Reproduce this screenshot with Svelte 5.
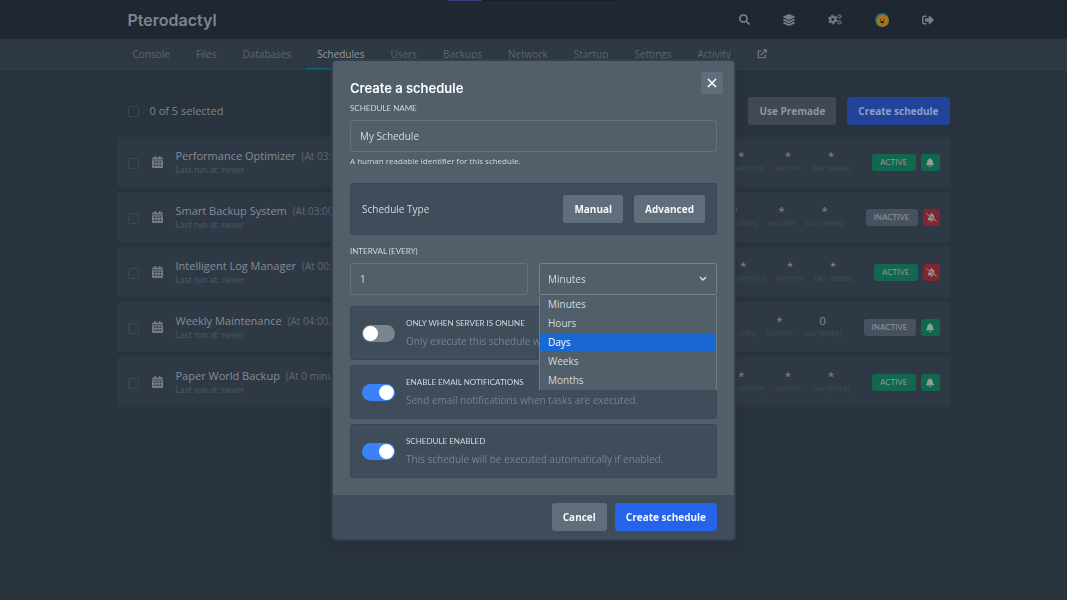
<script>
    const tabs = ['Console', 'Files', 'Databases', 'Schedules', 'Users', 'Backups', 'Network', 'Startup', 'Settings', 'Activity'];
    const units = ['Minutes', 'Hours', 'Days', 'Weeks', 'Months'];
    const columns = ['Minute', 'Hour', 'Day (Month)', 'Month', 'Day (Week)'];

    const schedules = [
        { name: 'Performance Optimizer', when: 'At 03:00 AM', cron: ['0', '3', '*', '*', '*'], active: true, notify: true },
        { name: 'Smart Backup System', when: 'At 03:00', cron: ['0', '3', '*', '*', '*'], active: false, notify: false },
        { name: 'Intelligent Log Manager', when: 'At 00:00', cron: ['0', '0', '*', '*', '*'], active: true, notify: false },
        { name: 'Weekly Maintenance', when: 'At 04:00, only on Sunday', cron: ['0', '4', '*', '*', '0'], active: false, notify: true },
        { name: 'Paper World Backup', when: 'At 0 minutes past the hour', cron: ['0', '*', '*', '*', '*'], active: true, notify: true },
    ];

    let name = $state('My Schedule');
    let interval = $state('1');
    let unit = $state('Minutes');
    let highlighted = $state('Days');
    let options = $state([
        { id: 'online', title: 'Only when server is online', text: 'Only execute this schedule when the server is running.', on: false },
        { id: 'email', title: 'Enable email notifications', text: 'Send email notifications when tasks are executed.', on: true },
        { id: 'enabled', title: 'Schedule enabled', text: 'This schedule will be executed automatically if enabled.', on: true },
    ]);
</script>

<div class="loader"></div>

<header>
    <div class="wrap topbar">
        <a class="brand" href="#home">Pterodactyl</a>
        <nav class="tools">
            <a href="#search" aria-label="Search">
                <svg viewBox="0 0 512 512" width="11" height="11"><path d="M505 442.7L405.3 343c-4.5-4.5-10.6-7-17-7H372c27.6-35.3 44-79.7 44-128C416 93.1 322.9 0 208 0S0 93.1 0 208s93.1 208 208 208c48.3 0 92.7-16.4 128-44v16.3c0 6.4 2.5 12.5 7 17l99.7 99.7c9.4 9.4 24.6 9.4 33.9 0l28.3-28.3c9.4-9.4 9.4-24.6.1-34zM208 336c-70.7 0-128-57.2-128-128 0-70.7 57.2-128 128-128 70.7 0 128 57.2 128 128 0 70.7-57.2 128-128 128z"/></svg>
            </a>
            <a href="#servers" aria-label="Servers">
                <svg viewBox="0 0 512 512" width="12" height="12"><path d="M12.41 148.02l232.94 105.67c6.8 3.09 14.49 3.09 21.29 0l232.94-105.67c16.55-7.51 16.55-32.52 0-40.03L266.65 2.31a25.607 25.607 0 0 0-21.29 0L12.41 107.98c-16.55 7.51-16.55 32.53 0 40.04zm487.18 88.28l-58.09-26.33-161.64 73.27c-7.56 3.43-15.59 5.17-23.86 5.17s-16.29-1.74-23.86-5.17L70.51 209.97l-58.1 26.33c-16.55 7.5-16.55 32.5 0 40l232.94 105.59c6.8 3.08 14.49 3.08 21.29 0L499.59 276.3c16.55-7.5 16.55-32.5 0-40zm0 127.8l-57.87-26.23-161.86 73.37c-7.56 3.43-15.59 5.17-23.86 5.17s-16.29-1.74-23.86-5.17L70.29 337.87 12.41 364.1c-16.55 7.5-16.55 32.5 0 40l232.94 105.59c6.8 3.08 14.49 3.08 21.29 0L499.59 404.1c16.55-7.5 16.55-32.5 0-40z"/></svg>
            </a>
            <a href="#admin" aria-label="Admin">
                <svg viewBox="0 0 28 22" width="14" height="11" fill="none">
                    <g class="line">
                        <circle cx="9.5" cy="11" r="4.8" stroke-width="4"/>
                        <circle cx="9.5" cy="11" r="7.8" stroke-width="3.4" stroke-dasharray="4.6 3.57"/>
                        <circle cx="23" cy="5" r="2.5" stroke-width="2"/>
                        <circle cx="23" cy="5" r="4.1" stroke-width="1.6" stroke-dasharray="2.2 2.1"/>
                        <circle cx="23" cy="17" r="2.5" stroke-width="2"/>
                        <circle cx="23" cy="17" r="4.1" stroke-width="1.6" stroke-dasharray="2.2 2.1"/>
                    </g>
                </svg>
            </a>
            <a href="#account" aria-label="Account">
                <svg viewBox="0 0 28 28" width="14" height="14">
                    <circle cx="14" cy="14" r="14" fill="#1e7070"/>
                    <circle cx="15.5" cy="15.5" r="12.3" fill="#a5741c"/>
                    <path d="M11 12v3M18 12v3" stroke="#352910" stroke-width="1.6"/>
                    <path d="M10.5 16.5h8q0 4-4 4t-4-4z" fill="#211b16"/>
                </svg>
            </a>
            <a href="#logout" aria-label="Sign out">
                <svg viewBox="0 0 512 512" width="12" height="12"><path d="M497 273L329 441c-15 15-41 4.5-41-17v-96H152c-13.3 0-24-10.7-24-24v-96c0-13.3 10.7-24 24-24h136V88c0-21.4 25.9-32 41-17l168 168c9.3 9.4 9.3 24.6 0 34zM192 436v-40c0-6.6-5.4-12-12-12H96c-17.7 0-32-14.3-32-32V160c0-17.7 14.3-32 32-32h84c6.6 0 12-5.4 12-12V76c0-6.6-5.4-12-12-12H96c-53 0-96 43-96 96v192c0 53 43 96 96 96h84c6.6 0 12-5.4 12-12z"/></svg>
            </a>
        </nav>
    </div>
</header>

<nav class="subnav">
    <div class="wrap tabs">
        {#each tabs as tab}
            <a href="#{tab.toLowerCase()}" class:active={tab == 'Schedules'}>{tab}</a>
        {/each}
        <a href="#external" aria-label="Open in admin">
            <svg viewBox="0 0 20 20" width="10" height="10" fill="none">
                <path class="line" d="M9 3.5H2.5v14h14V11M12 1.5h6.5V8M18 2L7.5 12.5" stroke-width="2.4"/>
            </svg>
        </a>
    </div>
</nav>

<main class="wrap">
    <div class="actions">
        <label class="count"><input type="checkbox"> 0 of 5 selected</label>
        <button class="btn dim">Use Premade</button>
        <button class="btn dim blue">Create schedule</button>
    </div>

    <div class="list">
        {#each schedules as schedule}
            <div class="row">
                <input type="checkbox" aria-label="Select {schedule.name}">
                <svg class="calendar" viewBox="0 0 22 24" width="11" height="12">
                    <path fill-rule="evenodd" d="M5 0h3v3h6V0h3v3h3q2 0 2 2v2H0V5q0-2 2-2h3zM0 8.5h22V22q0 2-2 2H2q-2 0-2-2zM3.5 11v3H7v-3zM9.2 11v3h3.500v-3zM15 11v3h3.500v-3zM3.500 17v3H7v-3zM9.200 17v3h3.500v-3zM15 17v3h3.500v-3z"/>
                </svg>
                <div class="info">
                    <p class="name">{schedule.name} <span>({schedule.when})</span></p>
                    <p class="last">Last run at: never</p>
                </div>
                <div class="cron">
                    {#each schedule.cron as value, i}
                        <div>
                            <p class="value">{value}</p>
                            <p class="unit">{columns[i]}</p>
                        </div>
                    {/each}
                </div>
                <span class="badge" class:green={schedule.active}>{schedule.active ? 'Active' : 'Inactive'}</span>
                {#if schedule.notify}
                    <button class="bell green" aria-label="Notifications on">
                        <svg viewBox="0 0 448 512" width="8" height="9"><path d="M224 512c35.32 0 63.97-28.65 63.97-64H160.03c0 35.35 28.65 64 63.97 64zm215.39-149.71c-19.32-20.76-55.47-51.99-55.47-154.29 0-77.7-54.48-139.9-127.94-155.16V32c0-17.67-14.32-32-31.98-32s-31.98 14.33-31.98 32v20.84C118.56 68.1 64.08 130.3 64.08 208c0 102.3-36.15 133.53-55.47 154.29-6 6.45-8.66 14.16-8.61 21.71.11 16.4 12.98 32 32.1 32h383.8c19.12 0 32-15.6 32.1-32 .05-7.55-2.61-15.27-8.61-21.71z"/></svg>
                    </button>
                {:else}
                    <button class="bell red" aria-label="Notifications off">
                        <svg viewBox="-96 0 640 512" width="11" height="9">
                            <path d="M224 512c35.32 0 63.97-28.65 63.97-64H160.03c0 35.35 28.65 64 63.97 64zm215.39-149.71c-19.32-20.76-55.47-51.99-55.47-154.29 0-77.7-54.48-139.9-127.94-155.16V32c0-17.67-14.32-32-31.98-32s-31.98 14.33-31.98 32v20.84C118.56 68.1 64.08 130.3 64.08 208c0 102.3-36.15 133.53-55.47 154.29-6 6.45-8.66 14.16-8.61 21.71.11 16.4 12.98 32 32.1 32h383.8c19.12 0 32-15.6 32.1-32 .05-7.55-2.61-15.27-8.61-21.71z"/>
                            <path d="M-50 85L520 525M-50 -15L550 445" stroke="#80262e" stroke-width="50"/>
                            <path class="line" d="M-80 20L530 490" stroke-width="56"/>
                        </svg>
                    </button>
                {/if}
            </div>
        {/each}
    </div>
</main>

<div class="overlay">
    <form class="modal" aria-labelledby="modal-title" onsubmit={(e) => e.preventDefault()}>
        <button class="close" type="button" aria-label="Close">
            <svg viewBox="0 0 10 10" width="10" height="10"><path d="M1 1l8 8M9 1L1 9" stroke="#fff" stroke-width="1.6"/></svg>
        </button>
        <div class="content">
            <h2 id="modal-title">Create a schedule</h2>
            <label class="caption" for="name">Schedule name</label>
            <input class="field" id="name" type="text" bind:value={name}>
            <p class="help">A human readable identifier for this schedule.</p>

            <div class="box type">
                <span>Schedule Type</span>
                <button class="btn" type="button">Manual</button>
                <button class="btn" type="button">Advanced</button>
            </div>

            <label class="caption" for="interval">Interval (every)</label>
            <div class="interval">
                <input class="field" id="interval" type="text" bind:value={interval}>
                <div class="picker">
                    <select class="field" aria-label="Interval unit" bind:value={unit}>
                        {#each units as item}
                            <option>{item}</option>
                        {/each}
                    </select>
                    <svg class="chevron" viewBox="0 0 8 6" width="8" height="6" fill="none"><path d="M1 1l3 3 3-3" stroke="#e2e6ea" stroke-width="1.3"/></svg>
                    <ul class="menu" role="listbox" aria-label="Units">
                        {#each units as item}
                            <li role="option" aria-selected={item == highlighted} onmouseenter={() => highlighted = item}>{item}</li>
                        {/each}
                    </ul>
                </div>
            </div>

            <div class="switches">
                {#each options as option}
                    <div class="box switch">
                        <input type="checkbox" id={option.id} bind:checked={option.on}>
                        <div>
                            <label class="caption" for={option.id}>{option.title}</label>
                            <p>{option.text}</p>
                        </div>
                    </div>
                {/each}
            </div>
        </div>
        <footer>
            <button class="btn" type="button">Cancel</button>
            <button class="btn blue" type="submit">Create schedule</button>
        </footer>
    </form>
</div>

<style>
    :global(body) {
        background: #29333d;
        color: #848c95;
        font: 11px/16px "Open Sans", "Noto Sans", sans-serif;
    }

    :global(*) {
        box-sizing: border-box;
    }

    p, h2, ul {
        margin: 0;
        padding: 0;
    }

    a {
        color: inherit;
        text-decoration: none;
    }

    button, input, select {
        margin: 0;
        font: inherit;
    }

    svg {
        display: block;
        flex: none;
        fill: #737c87;
    }

    svg[fill="none"] {
        fill: none;
    }

    .line {
        stroke: #737c87;
    }

    .loader {
        position: absolute;
        top: 0;
        left: 42%;
        width: 168px;
        height: 1px;
        background: linear-gradient(90deg, #3d3c7c 20%, #1b2027 20%);
    }

    .wrap {
        max-width: 834px;
        margin: 0 auto;
    }

    header {
        background: #1f2732;
    }

    .topbar {
        display: flex;
        align-items: center;
        justify-content: space-between;
        height: 39px;
        padding: 0 17px 0 11px;
    }

    .brand {
        color: #7d858f;
        font: 600 16px/24px Inter, sans-serif;
    }

    .tools {
        display: flex;
        align-items: center;
        gap: 33px;
    }

    .subnav {
        background: #2f3944;
        border-bottom: 1px solid #33404a;
    }

    .tabs {
        display: flex;
        gap: 4px;
        padding: 0 5px;
        color: #5b6772;
        font-size: 10px;
    }

    .tabs a {
        display: flex;
        align-items: center;
        height: 30px;
        padding: 0 11px;
    }

    .tabs .active {
        color: #929aa2;
        box-shadow: inset 0 -1px #0b6a7d;
    }

    .actions {
        display: flex;
        align-items: center;
        gap: 11px;
        padding: 27px 1px 12px 11px;
    }

    .count {
        display: flex;
        align-items: center;
        gap: 11px;
        margin-right: auto;
        color: #7e8790;
    }

    .count input, .row input {
        appearance: none;
        width: 11px;
        height: 11px;
        border: 1px solid #3c4752;
        border-radius: 2px;
    }

    .btn {
        height: 28px;
        padding: 0 11px;
        border: 0;
        border-radius: 3px;
        background: #606d7a;
        color: #f5f7fa;
        font-size: 10px;
        font-weight: 700;
    }

    .btn.blue {
        background: #2563eb;
    }

    .btn.dim {
        background: #3f4853;
        color: #8f969e;
    }

    .btn.dim.blue {
        background: #21439a;
        color: #8e9fc8;
    }

    .list {
        display: flex;
        flex-direction: column;
        gap: 5px;
    }

    .row {
        display: flex;
        align-items: center;
        height: 50px;
        padding: 0 11px;
        border-radius: 3px;
        background: #2f3945;
    }

    .row input {
        margin: 3px 13px 0 0;
    }

    .info {
        flex: 1;
        min-width: 0;
        margin-left: 13px;
        white-space: nowrap;
    }

    .name {
        line-height: 15px;
    }

    .name span {
        margin-left: 3px;
        color: #5d6873;
        font-size: 10px;
    }

    .last {
        color: #4b5662;
        font-family: Lato, sans-serif;
        font-size: 9px;
        line-height: 12px;
    }

    .cron {
        display: flex;
        gap: 11px;
        margin-right: 22px;
        text-align: center;
    }

    .value {
        line-height: 14px;
    }

    .unit {
        color: #424d58;
        font-size: 7px;
        line-height: 12px;
        text-transform: uppercase;
    }

    .badge {
        padding: 0 8px;
        border-radius: 3px;
        background: #48525e;
        color: #8e969e;
        font-family: Lato, sans-serif;
        font-size: 8px;
        line-height: 17px;
        text-transform: uppercase;
    }

    .bell {
        display: grid;
        place-items: center;
        width: 19px;
        height: 17px;
        margin-left: 5px;
        padding: 0;
        border: 0;
        border-radius: 3px;
    }

    .bell svg {
        fill: #8fa09f;
    }

    .green {
        background: #12674f;
    }

    .bell.red {
        width: 17px;
        background: #80262e;
    }

    .bell.red .line {
        stroke: #a39093;
    }

    .overlay {
        position: fixed;
        inset: 0;
        display: grid;
        place-items: center;
    }

    .modal {
        position: relative;
        width: 401px;
        max-width: 100%;
        border-radius: 3px;
        background: #515f6b;
        box-shadow: 0 0 0 2px #33404c, 0 4px 10px #1b253080;
        color: #d3d8dd;
        font-size: 10px;
    }

    .close {
        position: absolute;
        top: 11px;
        right: 11px;
        display: grid;
        place-items: center;
        width: 22px;
        height: 22px;
        padding: 0;
        border: 0;
        border-radius: 3px;
        background: #606d7a;
    }

    .content {
        padding: 17px;
    }

    h2 {
        color: #fff;
        font: 600 13px/20px Inter, sans-serif;
    }

    .caption {
        display: block;
        font-family: Lato, sans-serif;
        font-size: 8px;
        line-height: 16px;
        text-transform: uppercase;
    }

    .content > .caption {
        margin: 2px 0 4px;
    }

    .field {
        display: block;
        width: 100%;
        height: 32px;
        padding: 0 9px;
        border: 1px solid #65717d;
        border-radius: 3px;
        outline: 0;
        background: #515f6b;
        color: #d3d8dd;
    }

    .help {
        margin-bottom: 14px;
        font-size: 8px;
        line-height: 17px;
    }

    .box {
        display: flex;
        align-items: center;
        padding: 11px;
        border: 1px solid #394652;
        border-radius: 3px;
        background: #3f4d5a;
    }

    .type {
        gap: 11px;
        margin-bottom: 8px;
    }

    .type span {
        margin-right: auto;
    }

    .interval {
        display: grid;
        grid-template-columns: 1fr 1fr;
        gap: 11px;
    }

    .picker {
        position: relative;
    }

    .picker .field {
        appearance: none;
        padding: 0 8px;
        border-color: #76818c;
    }

    .chevron {
        position: absolute;
        top: 13px;
        right: 10px;
        pointer-events: none;
    }

    .menu {
        position: absolute;
        top: 100%;
        left: 0;
        right: 0;
        border: solid #74797e;
        border-width: 0 1px;
        background: #515f6b;
        list-style: none;
    }

    .menu li {
        padding: 0 8px;
        line-height: 19px;
    }

    .menu [aria-selected="true"] {
        background: #1967d2;
        color: #fff;
    }

    .switches {
        display: grid;
        gap: 5px;
        margin-top: 11px;
    }

    .switch {
        gap: 11px;
        padding: 8px 11px;
    }

    .switch p {
        color: #76828d;
        line-height: 20px;
    }

    .switch input {
        display: flex;
        appearance: none;
        flex: none;
        width: 33px;
        height: 17px;
        padding: 1px;
        border-radius: 9px;
        background: #7b8590;
    }

    .switch input::before {
        content: "";
        width: 15px;
        height: 15px;
        border-radius: 50%;
        background: #fff;
    }

    .switch input:checked {
        justify-content: flex-end;
        background: #3b82f6;
    }

    footer {
        display: flex;
        justify-content: flex-end;
        gap: 8px;
        padding: 8px 17px;
        border-radius: 0 0 3px 3px;
        background: #3f4d5a;
    }
</style>
